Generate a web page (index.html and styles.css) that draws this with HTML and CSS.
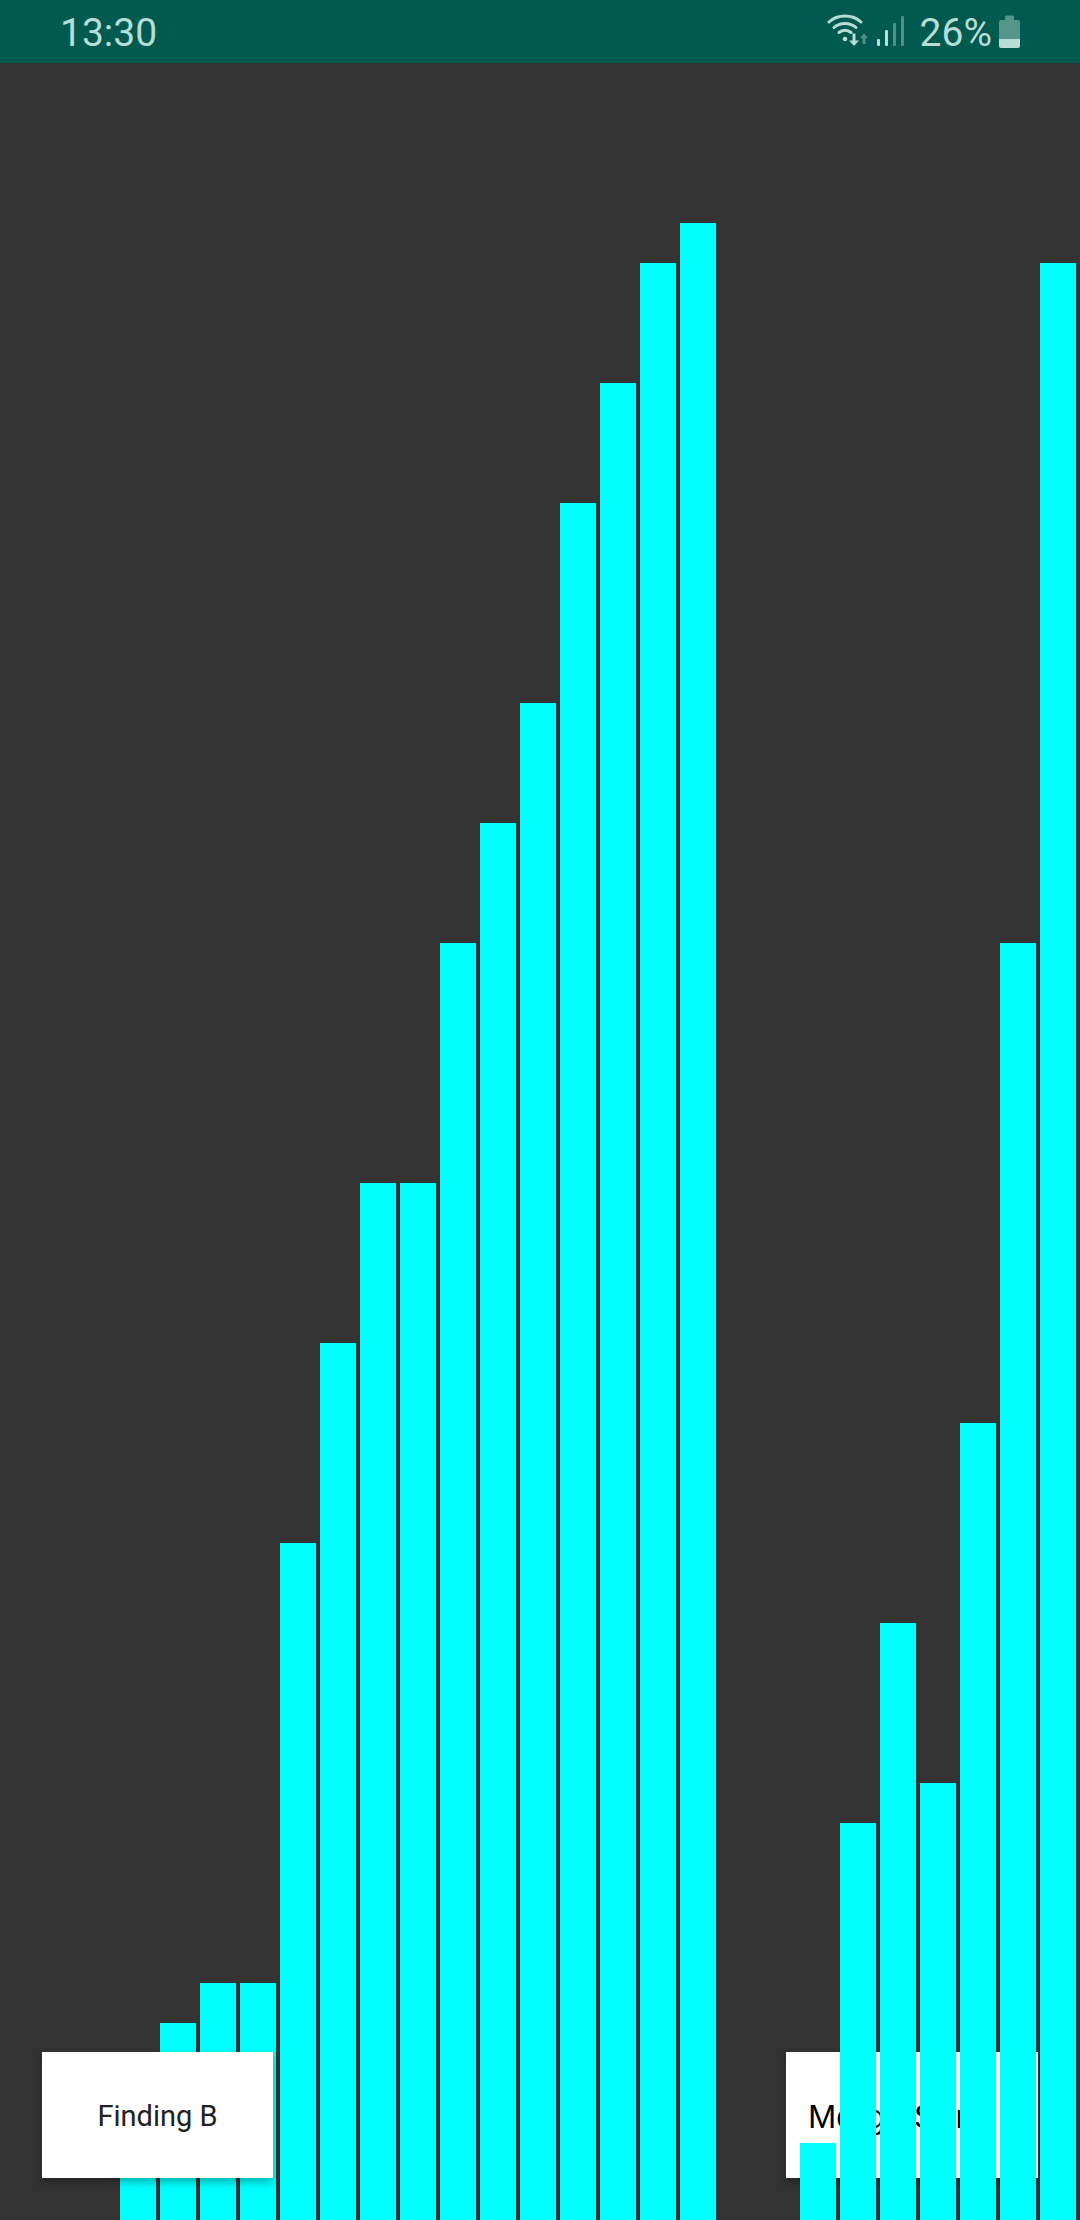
FILE: index.html
```html
<!DOCTYPE html>
<html lang="en">

<head>
    <meta charset="UTF-8">
    <meta name="viewport" content="width=device-width, initial-scale=1.0">
    <title>Sorting Visualizer</title>
    <link rel="stylesheet" href="styles.css">
</head>

<body>

    <div class="status-bar">
        <span class="status-time">13:30</span>
        <div class="status-icons">
            <!-- wifi with data arrows -->
            <svg class="icon-wifi" width="42" height="36" viewBox="0 0 42 36">
                <g fill="none" stroke="#b9dcd7" stroke-width="3" stroke-linecap="round">
                    <path d="M2 8 C10.500 0 25.500 0 34 8" />
                    <path d="M7 13.500 C13 8 23 8 29 13.500" />
                    <path d="M12 18.500 C15.500 15.500 20.500 15.500 24 18.500" />
                </g>
                <circle cx="18" cy="25" r="2.300" fill="#b9dcd7" />
                <path d="M25.500 19.500 h3 v7 h3.500 l-5 5.500 l-5 -5.500 h3.500 z" fill="#b9dcd7" />
                <path d="M33 24 l4 -4.500 l4 4.500 h-2.500 v6 h-3 v-6 z" fill="#4f9186" />
            </svg>
            <!-- signal -->
            <svg class="icon-signal" width="28" height="32" viewBox="0 0 28 32">
                <rect x="0" y="24" width="3" height="7" rx="1" fill="#b9dcd7" />
                <rect x="8" y="15" width="3" height="16" rx="1" fill="#b9dcd7" />
                <rect x="16" y="8" width="3" height="23" rx="1" fill="#4f9186" />
                <rect x="24" y="1" width="3" height="30" rx="1" fill="#4f9186" />
            </svg>
            <span class="status-pct">26%</span>
            <!-- battery -->
            <svg class="icon-battery" width="21" height="33" viewBox="0 0 21 33">
                <path d="M6 2 a1.500 1.500 0 0 1 1.500 -1.500 h6 a1.500 1.500 0 0 1 1.500 1.500 v3 h-9 z" fill="#55958a" />
                <path d="M0 7 a2 2 0 0 1 2 -2 h17 a2 2 0 0 1 2 2 v17 h-21 z" fill="#55958a" />
                <path d="M0 24 h21 v7 a2 2 0 0 1 -2 2 h-17 a2 2 0 0 1 -2 -2 z" fill="#b9dcd7" />
            </svg>
        </div>
    </div>

    <div class="stage">
        <div class="chart chart-left">
            <div class="bar" style="height:120px"></div>
            <div class="bar" style="height:197px"></div>
            <div class="bar" style="height:237px"></div>
            <div class="bar" style="height:237px"></div>
            <div class="bar" style="height:677px"></div>
            <div class="bar" style="height:877px"></div>
            <div class="bar" style="height:1037px"></div>
            <div class="bar" style="height:1037px"></div>
            <div class="bar" style="height:1277px"></div>
            <div class="bar" style="height:1397px"></div>
            <div class="bar" style="height:1517px"></div>
            <div class="bar" style="height:1717px"></div>
            <div class="bar" style="height:1837px"></div>
            <div class="bar" style="height:1957px"></div>
            <div class="bar" style="height:1997px"></div>
        </div>

        <button class="algo-btn btn-finding">Finding B</button>
        <button class="algo-btn btn-merge">Merge Sort</button>

        <div class="chart chart-right">
            <div class="bar" style="height:77px"></div>
            <div class="bar" style="height:397px"></div>
            <div class="bar" style="height:597px"></div>
            <div class="bar" style="height:437px"></div>
            <div class="bar" style="height:797px"></div>
            <div class="bar" style="height:1277px"></div>
            <div class="bar" style="height:1957px"></div>
        </div>
    </div>

</body>

</html>
```

FILE: styles.css
```css
html,
body {
    margin: 0;
    height: 2220px;
    overflow: hidden;
    background-color: #333333;
}

.status-bar {
    height: 63px;
    box-sizing: border-box;
    padding: 3px 60px 0 60px;
    display: flex;
    justify-content: space-between;
    align-items: center;
    background-color: #005a4f;
    color: #b9dcd7;
    font-family: Roboto, sans-serif;
    font-size: 39px;
}

.status-icons {
    display: flex;
    align-items: center;
}

.icon-wifi {
    margin-right: 8px;
    margin-top: -3px;
}

.icon-signal {
    margin-right: 15px;
    margin-top: -4px;
}

.status-pct {
    margin-right: 7px;
}

.icon-battery {
    margin-top: -4px;
}

.stage {
    position: relative;
    height: 2157px;
    display: flex;
    align-items: flex-end;
    padding-left: 120px;
}

.chart {
    display: flex;
    align-items: flex-end;
    gap: 4px;
}

.chart-right {
    position: relative;
    margin-left: 84px;
}

.bar {
    width: 36px;
    background-color: #00ffff;
}

.algo-btn {
    position: absolute;
    top: 1989px;
    height: 126px;
    border: none;
    background-color: #fff;
    color: #222;
    box-shadow: 0 4px 8px rgba(0, 0, 0, 0.3);
}

.btn-finding {
    left: 42px;
    width: 231px;
    font-family: Roboto, sans-serif;
    font-size: 29px;
    padding: 2px 0 0;
}

.btn-merge {
    left: 786px;
    width: 252px;
    padding: 2px 0 0 22px;
    text-align: left;
    color: #000;
    font-family: "Liberation Sans", Arial, sans-serif;
    font-size: 34px;
}
```
